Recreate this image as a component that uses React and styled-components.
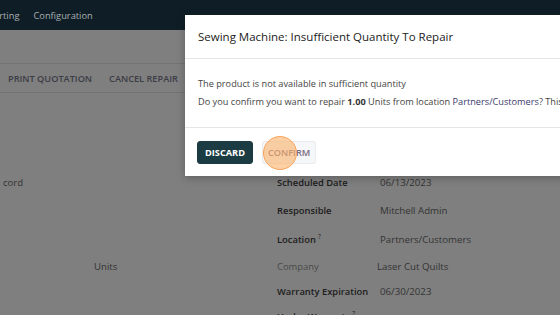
import React from "react";
import styled, { createGlobalStyle } from "styled-components";

const GlobalStyle = createGlobalStyle`
  html, body {
    margin: 0;
    padding: 0;
    overflow: hidden;
    background: #7f7f7f;
  }
  body {
    font-family: "Open Sans", "DejaVu Sans", sans-serif;
  }
`;

const Page = styled.div`
  position: relative;
  width: 560px;
  height: 315px;
  overflow: hidden;
  background: #7f7f7f;
`;

const NavBar = styled.div`
  height: 30px;
  background: #0f1e26;
  display: flex;
  align-items: center;
  overflow: hidden;
`;

const NavMenu = styled.div`
  display: flex;
  gap: 14px;
  margin-left: -23px;
`;

const NavItem = styled.span`
  font-size: 9.3px;
  color: #a9aeb3;
  white-space: nowrap;
`;

const ControlPanel = styled.div`
  height: 33px;
  border-bottom: 1px solid #737373;
`;

const StatusBar = styled.div`
  height: 28px;
  display: flex;
  align-items: center;
  gap: 17px;
  padding-left: 8px;
  border-bottom: 1px solid #737373;
`;

const StatusButton = styled.span`
  font-size: 9.2px;
  font-weight: 600;
  color: #3c3c46;
  text-transform: uppercase;
  white-space: nowrap;
`;

const Sheet = styled.div`
  display: grid;
  grid-template-columns: 277px 103px 1fr;
  grid-template-rows: 27px 29px 29px 25px 25px 25px;
  padding-top: 76px;
  align-items: center;
`;

const LeftCell = styled.div`
  font-size: 9.6px;
  color: #333;
  padding-left: ${p => p.$indent || 0}px;
  white-space: nowrap;
`;

const Label = styled.div`
  font-size: 9.4px;
  font-weight: ${p => (p.$muted ? 400 : 600)};
  color: ${p => (p.$muted ? "#4a4a4a" : "#1c1c1c")};
  white-space: nowrap;
  sup {
    font-size: 6.5px;
    font-weight: 400;
    margin-left: 2px;
  }
`;

const Value = styled.div`
  font-size: 9.7px;
  color: #333;
  white-space: nowrap;
  margin-left: ${p => (p.$readonly ? -3 : 0)}px;
`;

const Modal = styled.div`
  position: absolute;
  left: 185px;
  top: 15px;
  width: 500px;
  background: #fff;
  box-shadow: 0 2px 8px rgba(0, 0, 0, 0.25);
`;

const ModalHeader = styled.div`
  height: 43px;
  display: flex;
  align-items: center;
  padding-left: 13px;
  border-bottom: 1px solid #e6e6e6;
`;

const ModalTitle = styled.h4`
  margin: 0;
  font-size: 11.5px;
  font-weight: 400;
  color: #222;
  white-space: nowrap;
`;

const ModalBody = styled.div`
  padding: 16px 13px 16px;
  font-size: 9.2px;
  line-height: 18px;
  color: #444;
  border-bottom: 1px solid #e6e6e6;
  p {
    margin: 0;
    white-space: nowrap;
  }
  b {
    font-weight: 700;
    color: #333;
  }
`;

const Link = styled.span`
  color: #3b3a6a;
`;

const ModalFooter = styled.div`
  height: 48px;
  display: flex;
  align-items: center;
  gap: 9px;
  padding-left: 12px;
  box-sizing: border-box;
`;

const Button = styled.button`
  position: relative;
  height: 23px;
  padding: 0 ${p => (p.$primary ? 7 : 5)}px;
  border-radius: 3px;
  font-family: inherit;
  font-size: 9.2px;
  font-weight: ${p => (p.$primary ? 700 : 600)};
  text-transform: uppercase;
  border: 1px solid ${p => (p.$primary ? "#1c3c44" : "#e8eaee")};
  background: ${p => (p.$primary ? "#1c3c44" : "#f6f7f9")};
  color: ${p => (p.$primary ? "#fff" : "#7a6a82")};
`;

const ClickMarker = styled.span`
  position: absolute;
  left: 0;
  top: -6px;
  width: 32px;
  height: 32px;
  border-radius: 50%;
  background: rgba(251, 176, 104, 0.6);
  border: 1.5px solid #f7a45a;
  pointer-events: none;
`;

export default function App() {
  return (
    <Page>
      <GlobalStyle />
      <NavBar>
        <NavMenu>
          <NavItem>Reporting</NavItem>
          <NavItem>Configuration</NavItem>
        </NavMenu>
      </NavBar>
      <ControlPanel />
      <StatusBar>
        <StatusButton>Print Quotation</StatusButton>
        <StatusButton>Cancel Repair</StatusButton>
      </StatusBar>
      <Sheet>
        <LeftCell $indent={3}>cord</LeftCell>
        <Label>Scheduled Date</Label>
        <Value>06/13/2023</Value>

        <LeftCell />
        <Label>Responsible</Label>
        <Value>Mitchell Admin</Value>

        <LeftCell />
        <Label>
          Location<sup>?</sup>
        </Label>
        <Value>Partners/Customers</Value>

        <LeftCell $indent={94}>Units</LeftCell>
        <Label $muted>Company</Label>
        <Value $readonly>Laser Cut Quilts</Value>

        <LeftCell />
        <Label>Warranty Expiration</Label>
        <Value>06/30/2023</Value>

        <LeftCell />
        <Label>
          Under Warranty<sup>?</sup>
        </Label>
        <Value />
      </Sheet>

      <Modal>
        <ModalHeader>
          <ModalTitle>Sewing Machine: Insufficient Quantity To Repair</ModalTitle>
        </ModalHeader>
        <ModalBody>
          <p>The product is not available in sufficient quantity</p>
          <p>
            Do you confirm you want to repair <b>1.00</b> Units from location{" "}
            <Link>Partners/Customers</Link>? This may result in inconsistencies
            in your inventory.
          </p>
        </ModalBody>
        <ModalFooter>
          <Button $primary>Discard</Button>
          <Button>
            <ClickMarker />
            Confirm
          </Button>
        </ModalFooter>
      </Modal>
    </Page>
  );
}
